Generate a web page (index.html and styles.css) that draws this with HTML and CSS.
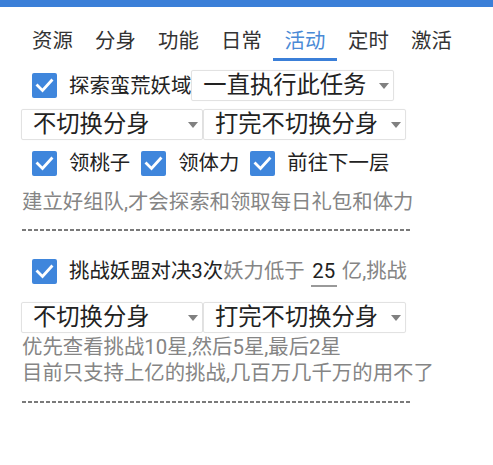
FILE: index.html
```html
<!DOCTYPE html>
<html lang="zh-CN">
<head>
<meta charset="utf-8">
<link rel="stylesheet" href="styles.css">
</head>
<body>
<div class="topbar"></div>
<nav class="tabs">
  <div class="tab">资源</div>
  <div class="tab">分身</div>
  <div class="tab">功能</div>
  <div class="tab">日常</div>
  <div class="tab active">活动</div>
  <div class="tab">定时</div>
  <div class="tab">激活</div>
</nav>
<main class="content">
  <div class="row row1">
    <span class="cb"><svg viewBox="0 0 25 25" width="25" height="25"><polyline points="5.5,12.5 10.5,17.5 19.5,7.5" fill="none" stroke="#fff" stroke-width="2.8" stroke-linecap="square"/></svg></span>
    <span class="label">探索蛮荒妖域</span>
    <div class="select w203"><span>一直执行此任务</span><svg class="arrow" viewBox="0 0 10 6" width="10" height="6"><polygon points="0,0 10,0 5,6" fill="#808080"/></svg></div>
  </div>
  <div class="row row2">
    <div class="select w181"><span>不切换分身</span><svg class="arrow" viewBox="0 0 10 6" width="10" height="6"><polygon points="0,0 10,0 5,6" fill="#808080"/></svg></div>
    <div class="select w203"><span>打完不切换分身</span><svg class="arrow" viewBox="0 0 10 6" width="10" height="6"><polygon points="0,0 10,0 5,6" fill="#808080"/></svg></div>
  </div>
  <div class="row row3">
    <span class="cb"><svg viewBox="0 0 25 25" width="25" height="25"><polyline points="5.5,12.5 10.5,17.5 19.5,7.5" fill="none" stroke="#fff" stroke-width="2.8" stroke-linecap="square"/></svg></span>
    <span class="label sp">领桃子</span>
    <span class="cb nomargin"><svg viewBox="0 0 25 25" width="25" height="25"><polyline points="5.5,12.5 10.5,17.5 19.5,7.5" fill="none" stroke="#fff" stroke-width="2.8" stroke-linecap="square"/></svg></span>
    <span class="label sp">领体力</span>
    <span class="cb nomargin"><svg viewBox="0 0 25 25" width="25" height="25"><polyline points="5.5,12.5 10.5,17.5 19.5,7.5" fill="none" stroke="#fff" stroke-width="2.8" stroke-linecap="square"/></svg></span>
    <span class="label">前往下一层</span>
  </div>
  <p class="hint hint1">建立好组队,才会探索和领取每日礼包和体力</p>
  <div class="dash dash1"></div>
  <div class="row row4">
    <span class="cb"><svg viewBox="0 0 25 25" width="25" height="25"><polyline points="5.5,12.5 10.5,17.5 19.5,7.5" fill="none" stroke="#fff" stroke-width="2.8" stroke-linecap="square"/></svg></span>
    <span class="label">挑战妖盟对决3次</span><span class="gray">妖力低于</span><span class="num">25</span><span class="gray">亿,挑战</span>
  </div>
  <div class="row row5">
    <div class="select w181"><span>不切换分身</span><svg class="arrow" viewBox="0 0 10 6" width="10" height="6"><polygon points="0,0 10,0 5,6" fill="#808080"/></svg></div>
    <div class="select w203"><span>打完不切换分身</span><svg class="arrow" viewBox="0 0 10 6" width="10" height="6"><polygon points="0,0 10,0 5,6" fill="#808080"/></svg></div>
  </div>
  <div class="notes">
    <p class="hint">优先查看挑战10星,然后5星,最后2星</p>
    <p class="hint">目前只支持上亿的挑战,几百万几千万的用不了</p>
  </div>
  <div class="dash dash2"></div>
</main>
</body>
</html>
```

FILE: styles.css
```css
* { box-sizing: border-box; }
html, body { margin: 0; padding: 0; background: #fff; }
body {
  font-family: Roboto, "Noto Sans CJK SC", sans-serif;
  color: #222;
  width: 493px;
  height: 465px;
  overflow: hidden;
}
.topbar { height: 7px; background: #3b7fd8; }
.tabs {
  display: flex;
  padding: 24px 0 0 21px;
}
.tab {
  width: 63px;
  text-align: center;
  font-size: 20.4px;
  line-height: 20px;
  padding-bottom: 7px;
  border-bottom: 3px solid transparent;
  color: #333;
}
.tab.active { color: #4a8ad6; border-bottom-color: #3b7fd8; width: 64px; }
.content { padding-left: 21px; }
.row { display: flex; align-items: center; }
.row1 { margin-top: 9px; height: 31px; }
.row2 { margin-top: 8px; height: 31px; }
.row3 { margin-top: 10px; height: 26px; }
.row4 { margin-top: 27px; height: 26px; }
.row5 { margin-top: 18px; height: 31px; }
.cb {
  width: 25px; height: 25px;
  background: #3f86dc;
  border-radius: 2px;
  margin-left: 11px;
  margin-right: 12px;
  flex: none;
  display: block;
}
.cb svg { display: block; }
.cb.nomargin { margin-left: 0; }
.label { font-size: 20.4px; line-height: 26px; color: #222; white-space: nowrap; }
.label.sp { margin-right: 11px; }
.gray { font-size: 20.4px; line-height: 26px; color: #858585; white-space: nowrap; }
.num {
  font-size: 20.4px; line-height: 26px; color: #222;
  width: 26px; text-align: center;
  margin: 0 5px 0 6px;
  position: relative;
}
.num::after {
  content: "";
  position: absolute;
  left: 0; right: 0; bottom: -3px;
  height: 2px; background: #999;
}
.select {
  height: 31px;
  border: 1px solid #e2e2e2;
  border-radius: 2px;
  box-shadow: 0 0 1px rgba(0,0,0,0.08);
  display: flex;
  align-items: center;
  justify-content: space-between;
  padding: 0 4px 0 11px;
  font-size: 23.3px;
  line-height: 29px;
  color: #222;
  white-space: nowrap;
  flex: none;
}
.select .arrow { display: block; margin-top: 1px; }
.w203 { width: 203px; }
.w181 { width: 182px; }
.hint {
  margin: 0;
  font-size: 20.4px;
  line-height: 26px;
  color: #858585;
  white-space: nowrap;
  padding-left: 1px;
}
.hint1 { margin-top: 13px; }
.notes { margin-top: 1px; display: flex; flex-direction: column; }
.dash {
  width: 389px;
  height: 2px;
  margin-left: 1px;
  background: repeating-linear-gradient(to right, #7a7a7a 0 4.5px, transparent 4.5px 6px);
}
.dash1 { margin-top: 14px; }
.dash2 { margin-top: 15px; }
```
